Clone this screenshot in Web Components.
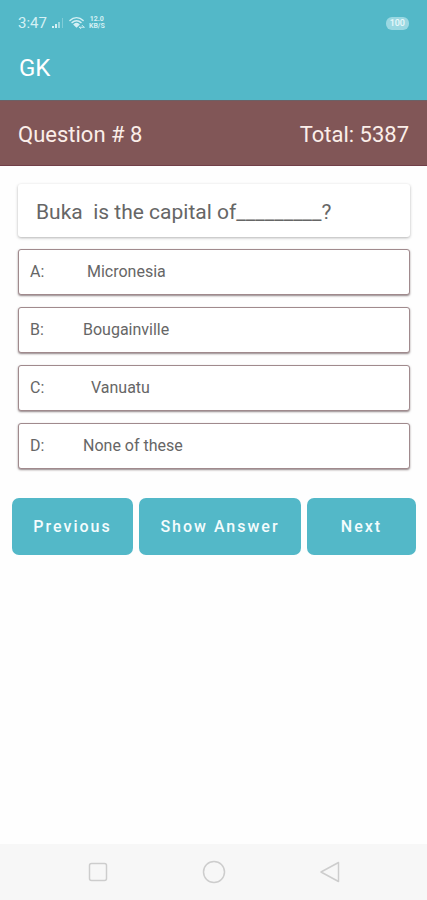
<!DOCTYPE html>
<html lang="en">
<head>
<meta charset="utf-8">
<meta name="viewport" content="width=device-width, initial-scale=1">
<title>GK Quiz</title>
<style>
html, body { margin: 0; min-height: 100%; }
body { background: #fefefe; font-family: Roboto, "Noto Sans", sans-serif; --teal: #53b8c8; --brown: #815657; }
</style>
</head>
<body>
<quiz-app></quiz-app>
<script>
const define = (name, html, init) => {
  const template = document.createElement('template');
  template.innerHTML = html;
  customElements.define(name, class extends HTMLElement {
    constructor() {
      super();
      this.attachShadow({ mode: 'open' }).append(template.content.cloneNode(true));
    }
    connectedCallback() { if (init) init(this, this.shadowRoot); }
  });
};

define('status-bar', `
<style>
:host { display: flex; align-items: center; justify-content: space-between; height: 46px; padding: 0 18px; background: var(--teal); color: #d5f0f4; }
.left { display: flex; align-items: center; gap: 4px; }
.time { font-size: 15px; line-height: 20px; }
.speed { font-size: 7px; line-height: 7px; font-weight: 700; text-align: center; }
.speed span { display: block; }
.battery { background: #9ad8e2; color: #e9f9fb; border-radius: 6px; font-size: 9px; line-height: 13px; font-weight: 500; padding: 0 4px; }
svg { display: block; }
</style>
<div class="left">
  <span class="time">3:47</span>
  <svg width="14" height="12" viewBox="0 0 14 12" fill="#d5f0f4"><path d="M1 9h2v2H1zM4 7h2v4H4z"/><path d="M7 5h2v6H7z" opacity=".6"/><path d="M11 1h1v10h-1z" opacity=".35"/></svg>
  <svg width="16" height="14" viewBox="0 0 17 14" fill="none" stroke="#d5f0f4" stroke-width="1.5" stroke-linecap="round"><path d="M1 4.300C5 .3 11 .3 15 4.300"/><path d="M3.200 6.600c2.700-2.600 6.900-2.600 9.600 0"/><path d="M5.500 8.700c1.500-1.300 3.500-1.300 5 0L8 11z" fill="#d5f0f4"/><path d="M11 11.500h5M14 9.500l2 2M11 11.500l1.500 1.500" stroke-width="1"/></svg>
  <span class="speed"><span>12.0</span><span>KB/S</span></span>
</div>
<span class="battery">100</span>`);

define('title-bar', `
<style>
:host { display: block; background: var(--teal); color: #fff; padding: 6px 19px 16px; }
h1 { margin: 0; font-size: 24px; line-height: 32px; font-weight: 400; }
</style>
<h1><slot></slot></h1>`);

define('progress-bar', `
<style>
:host { display: flex; justify-content: space-between; align-items: center; box-sizing: border-box; height: 66px; padding: 3px 18px 0; background: var(--brown); color: #fbeee9; border-top: 1px solid #6b6166; border-bottom: 1px solid #713f48; font-size: 22px; line-height: 30px; }
</style>
<slot name="current"></slot><slot name="total"></slot>`);

define('question-card', `
<style>
:host { display: block; background: #fff; color: #666; border-radius: 3px; box-shadow: 0 1px 3px rgba(0,0,0,.3); padding: 14px 18px 11px; }
p { margin: 0; font-size: 21px; line-height: 28px; white-space: pre-wrap; }
</style>
<p><slot></slot></p>`);

define('answer-option', `
<style>
:host { display: block; }
button { display: grid; grid-template-columns: 53px 1fr; align-items: center; width: 100%; height: 46px; box-sizing: border-box; margin: 0; padding: 0 11px; border: 1px solid #a08a8d; border-radius: 3px; background: #fff; box-shadow: 0 1px 2px rgba(40,15,20,.5); color: #666; font: 400 16px/20px Roboto, "Noto Sans", sans-serif; text-align: left; }
.text { white-space: pre; }
</style>
<button type="button"><span class="key"></span><span class="text"><slot></slot></span></button>`,
(host, root) => { root.querySelector('.key').textContent = host.getAttribute('key') + ':'; });

define('action-button', `
<style>
:host { display: block; }
button { width: 100%; height: 57px; margin: 0; padding: 0; border: 0; border-radius: 7px; background: var(--teal); color: #f4fcfd; font: 500 16px/24px Roboto, "Noto Sans", sans-serif; letter-spacing: 2px; white-space: nowrap; }
</style>
<button type="button"><slot></slot></button>`);

define('nav-bar', `
<style>
:host { display: grid; grid-template-columns: repeat(3, 116px); justify-content: center; background: #f7f7f7; height: 56px; }
button { display: grid; place-items: center; border: 0; background: none; padding: 0; margin: 0; }
svg { display: block; fill: none; stroke: #cdcdcd; stroke-width: 1.500; stroke-linejoin: round; }
</style>
<button type="button" aria-label="Recent apps"><svg width="24" height="24" viewBox="0 0 24 24"><rect x="3.500" y="3.500" width="17" height="17" rx="2"/></svg></button>
<button type="button" aria-label="Home"><svg width="24" height="24" viewBox="0 0 24 24"><circle cx="12" cy="12" r="10.500"/></svg></button>
<button type="button" aria-label="Back"><svg width="24" height="24" viewBox="0 0 24 24"><path d="M20.500 2.500v19L3 12z"/></svg></button>`);

define('quiz-app', `
<style>
:host { display: flex; flex-direction: column; min-height: 100vh; }
main { flex: 1; }
.quiz { display: grid; gap: 12px; padding: 18px 17px 0 18px; }
.actions { display: grid; grid-template-columns: 121fr 162fr 109fr; gap: 6px; padding: 29px 11px 0 12px; }
</style>
<status-bar></status-bar>
<title-bar>GK</title-bar>
<progress-bar><span slot="current">Question # 8</span><span slot="total">Total: 5387</span></progress-bar>
<main>
  <div class="quiz">
    <question-card>Buka  is the capital of_________?</question-card>
    <answer-option key="A"> Micronesia</answer-option>
    <answer-option key="B">Bougainville</answer-option>
    <answer-option key="C">  Vanuatu</answer-option>
    <answer-option key="D">None of these</answer-option>
  </div>
  <div class="actions">
    <action-button>Previous</action-button>
    <action-button>Show Answer</action-button>
    <action-button>Next</action-button>
  </div>
</main>
<nav-bar></nav-bar>`);
</script>
</body>
</html>
